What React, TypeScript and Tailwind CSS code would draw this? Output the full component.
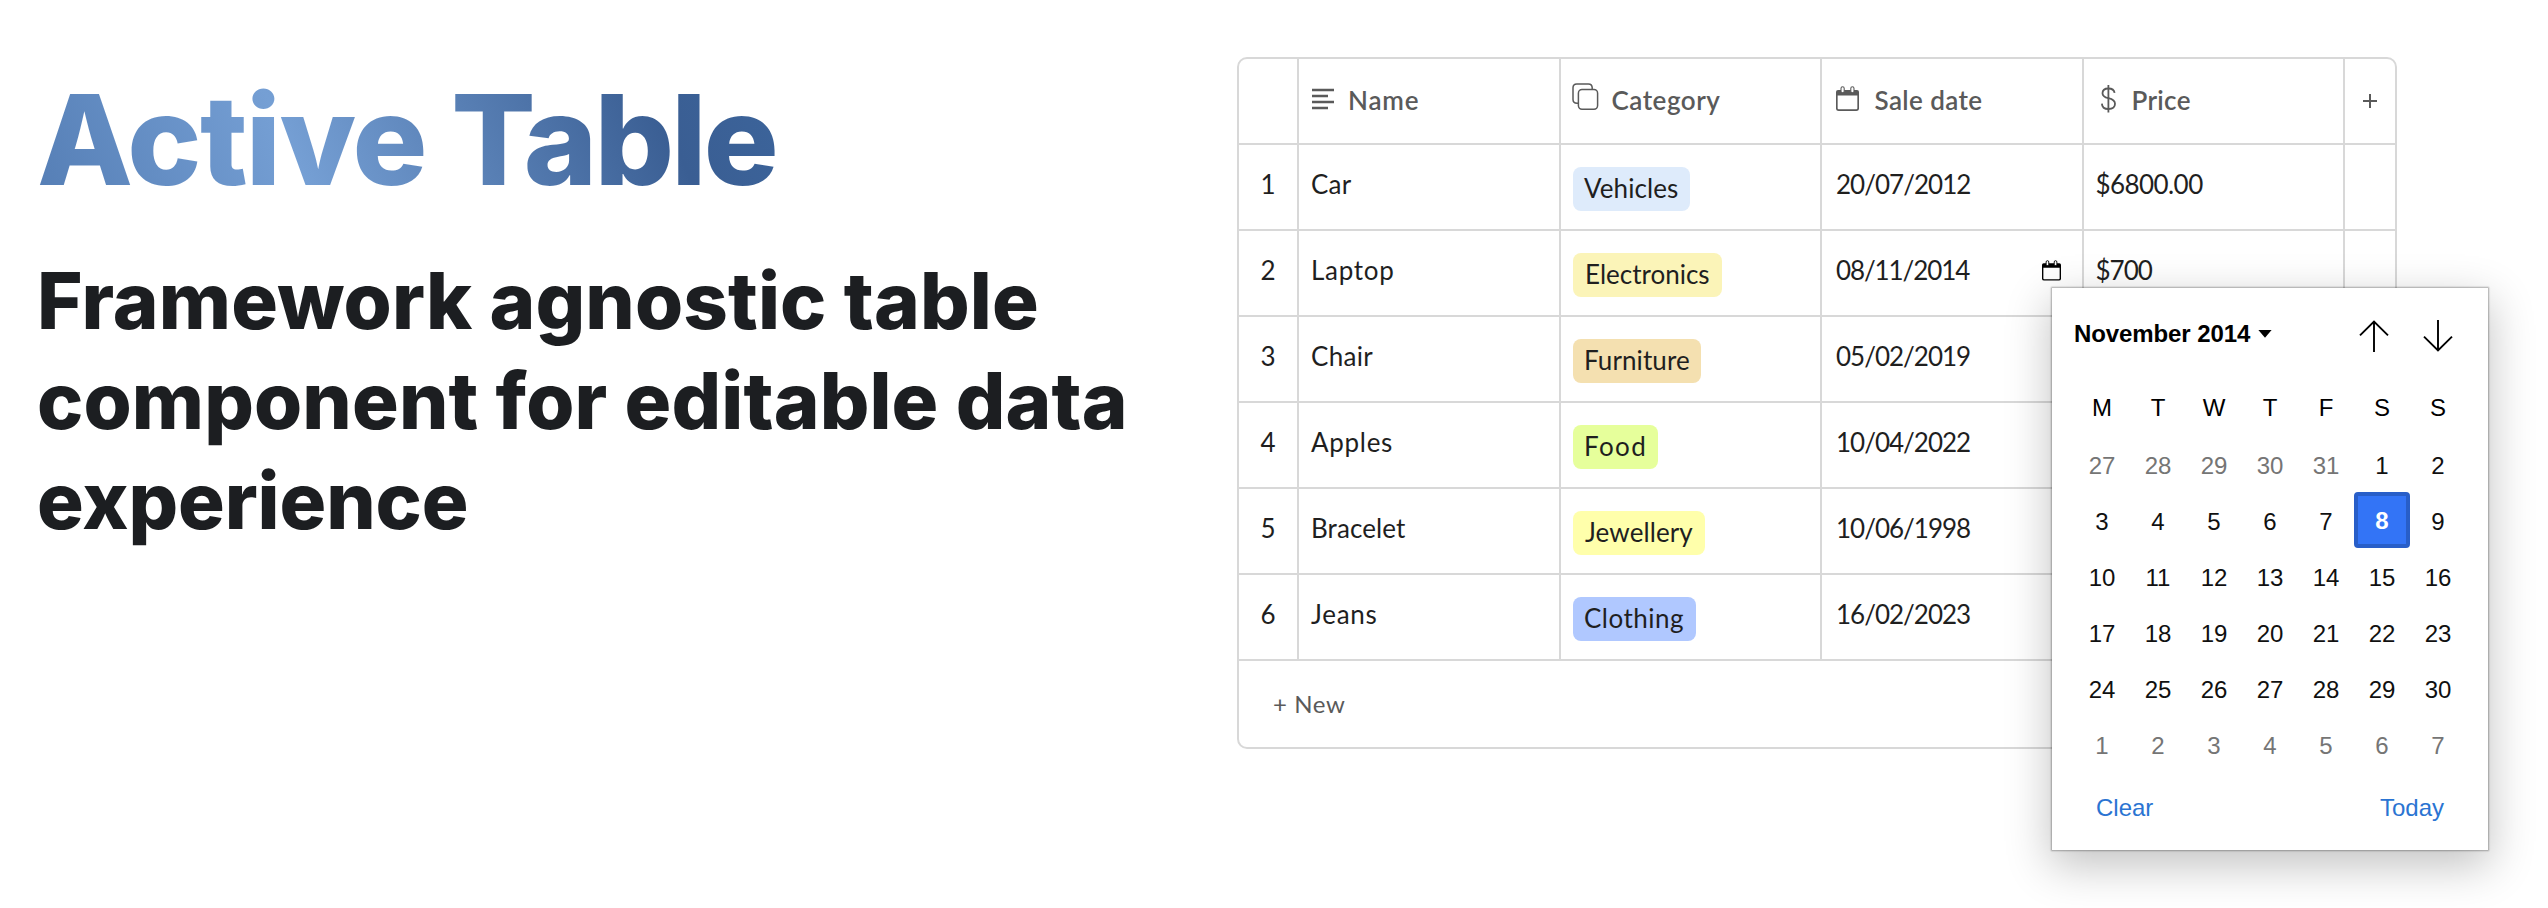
type Row = {
  name: string;
  nameTracking: string;
  category: string;
  tag: string;
  date: string;
  dateTracking: string;
  price?: string;
  priceTracking?: string;
};

const rows: Row[] = [
  { name: "Car", nameTracking: "tracking-[0.2px]", category: "Vehicles", tag: "w-[117px] bg-[#deebfb] pl-[11px] tracking-[0.1px]", date: "20/07/2012", dateTracking: "tracking-[-0.98px]", price: "$6800.00", priceTracking: "tracking-[-0.57px]" },
  { name: "Laptop", nameTracking: "tracking-[0.7px]", category: "Electronics", tag: "w-[149px] bg-[#fbf4b8] pl-[12px]", date: "08/11/2014", dateTracking: "tracking-[-1.1px]", price: "$700", priceTracking: "tracking-[-1px]" },
  { name: "Chair", nameTracking: "tracking-[0.3px]", category: "Furniture", tag: "w-[128px] bg-[#f4e0b0] pl-[11px] tracking-[0.1px]", date: "05/02/2019", dateTracking: "tracking-[-1px]" },
  { name: "Apples", nameTracking: "tracking-[0.7px]", category: "Food", tag: "w-[85px] bg-[#e6ff9b] pl-[11px] tracking-[1.4px]", date: "10/04/2022", dateTracking: "tracking-[-1px]" },
  { name: "Bracelet", nameTracking: "tracking-[0.1px]", category: "Jewellery", tag: "w-[132px] bg-[#ffffab] pl-[12px] tracking-[0.1px]", date: "10/06/1998", dateTracking: "tracking-[-1px]" },
  { name: "Jeans", nameTracking: "tracking-[0.7px]", category: "Clothing", tag: "w-[123px] bg-[#b0c8ff] pl-[11px] tracking-[0.5px]", date: "16/02/2023", dateTracking: "tracking-[-1px]" },
];

const columns = "grid grid-cols-[60px_262px_261px_262px_261px_50px]";
const cell = "h-full border-r-2 border-[#d8d8d8]";

const weekdays = ["M", "T", "W", "T", "F", "S", "S"];
const days = [
  27, 28, 29, 30, 31, 1, 2, 3, 4, 5, 6, 7, 8, 9, 10, 11, 12, 13, 14, 15, 16, 17, 18, 19, 20, 21, 22, 23, 24, 25, 26, 27,
  28, 29, 30, 1, 2, 3, 4, 5, 6, 7,
];

function TextIcon() {
  return (
    <svg width="22" height="22" viewBox="0 0 22 22" stroke="currentColor" strokeWidth="2.4" fill="none">
      <path d="M0 2H22M0 8H16M0 14H22M0 20H16" />
    </svg>
  );
}

function CopyIcon() {
  return (
    <svg width="27" height="27" viewBox="0 0 27 27" stroke="currentColor" strokeWidth="1.5" fill="none">
      <rect x="6.4" y="6.6" width="19.2" height="19.6" rx="3.6" />
      <path d="M6.2 20.2H5Q1 20 1 16.4V4.8Q1 1 4.8 1H16.4Q20 1 20.2 4.6V6.4" />
    </svg>
  );
}

function CalendarIcon({ size }: { size: number }) {
  return (
    <svg width={size} height={(size * 25) / 23} viewBox="0 0 23 25" fill="none" stroke="currentColor">
      <path d="M2 4H21Q23 4 23 6V9.5H0V6Q0 4 2 4Z" fill="currentColor" stroke="none" />
      <path d="M0.8 8V22.3Q0.8 24.1 2.6 24.1H20.4Q22.2 24.1 22.2 22.3V8" strokeWidth="1.7" />
      <rect x="5" y="0.8" width="3.2" height="6" rx="1.6" fill="white" strokeWidth="1.1" />
      <rect x="14.8" y="0.8" width="3.2" height="6" rx="1.6" fill="white" strokeWidth="1.1" />
    </svg>
  );
}

function DollarIcon() {
  return (
    <svg width="15" height="28" viewBox="0 0 15 28" stroke="currentColor" strokeWidth="1.8" fill="none">
      <path d="M13.6 7.9C13.2 5 10.8 3.5 7.4 3.5C3.8 3.5 1.5 5.3 1.5 8.2C1.5 11.4 4.2 12.4 7.4 13.2C11 14.1 14 15.2 14 18.8C14 22.2 11.2 24 7.5 24C3.6 24 1 22 0.9 18.6" />
      <path d="M7.4 0V27.6" />
    </svg>
  );
}

function ArrowIcon({ down = false }: { down?: boolean }) {
  return (
    <svg width="30" height="32" viewBox="0 0 30 32" stroke="currentColor" strokeWidth="1.9" fill="none">
      <path d={down ? "M15 0V31M1 16.6L15 30.4L29 16.6" : "M15 32V1M1 15.4L15 1.6L29 15.4"} />
    </svg>
  );
}

function DatePicker() {
  return (
    <div className="absolute left-[2052px] top-[288px] h-[562px] w-[436px] bg-white font-['Liberation_Sans',sans-serif] text-[24px] text-black shadow-[0_0_1.5px_0.7px_rgba(0,0,0,0.3),0_14px_42px_2px_rgba(0,0,0,0.24)]">
      <div className="flex h-[92px] items-center pl-[22px] pr-[35px]">
        <div className="flex items-center gap-[8px]">
          <span className="font-bold tracking-[-0.1px]">November 2014</span>
          <svg width="14" height="8" viewBox="0 0 14 8">
            <path d="M0.4 0H13.6L7 7.8Z" />
          </svg>
        </div>
        <div className="ml-auto mt-1 flex gap-[34px]">
          <ArrowIcon />
          <ArrowIcon down />
        </div>
      </div>
      <div className="grid grid-cols-7 px-[22px] text-center leading-[56px]">
        {weekdays.map((d, i) => (
          <div key={i} className="h-[56px]">{d}</div>
        ))}
        {days.map((d, i) =>
          i === 12 ? (
            <div key={i} className="h-[56px] rounded-[4px] border-4 border-[#285ec8] bg-[#3374f6] font-bold leading-[50px] text-white">
              {d}
            </div>
          ) : (
            <div key={i} className={i < 5 || i > 34 ? "h-[56px] pt-[2px] text-[#757575]" : "h-[56px] pt-[2px] text-[#101010]"}>
              {d}
            </div>
          ),
        )}
      </div>
      <div className="flex h-[72px] items-center justify-between px-[44px] text-[#2a74d2]">
        <span>Clear</span>
        <span>Today</span>
      </div>
    </div>
  );
}

export default function App() {
  return (
    <div className="relative flex h-[908px] w-[2548px] overflow-hidden bg-white">
      <div className="w-[1237px] shrink-0 pl-[37px] pt-[62px] font-['Inter',sans-serif] font-extrabold">
        <h1 className="w-fit bg-[linear-gradient(65deg,#547db4_0%,#759fd4_35%,#3a5e93_82%,#3c659c_100%)] bg-clip-text pr-2 text-[124.8px] leading-[156px] tracking-[-1.7px] text-transparent">
          Active <span className="tracking-[-2.8px]">Table</span>
        </h1>
        <h2 className="mt-[33px] text-[77.9px] leading-[100px] tracking-[0.13px] text-[#1c1e21]">
          Framework agnostic table
          <br />
          component for editable data
          <br />
          <span className="tracking-[-0.1px]">experience</span>
        </h2>
      </div>

      <div className="mt-[57px] h-[692px] w-[1160px] shrink-0 overflow-hidden rounded-[10px] border-2 border-[#d8d8d8] font-['Lato',sans-serif] text-[26px] leading-[32px] text-[#1f1f1f]">
        <div className={`${columns} h-[86px] border-b-2 border-[#d8d8d8] font-semibold text-[#5a5a5a]`}>
          <div className={cell} />
          <div className={`${cell} flex pl-[13px] pt-[25px]`}>
            <div className="mt-[4px] w-[36px]"><TextIcon /></div>
            <span className="tracking-[0.8px]">Name</span>
          </div>
          <div className={`${cell} flex pl-[11px] pt-[25px]`}>
            <div className="-mt-px w-[39.5px]"><CopyIcon /></div>
            <span className="tracking-[0.5px]">Category</span>
          </div>
          <div className={`${cell} flex pl-[13.5px] pt-[25px]`}>
            <div className="mt-[2px] w-[39px]"><CalendarIcon size={23} /></div>
            <span className="tracking-[0.4px]">Sale date</span>
          </div>
          <div className={`${cell} flex pl-[17px] pt-[25px]`}>
            <div className="mt-px w-[30.5px]"><DollarIcon /></div>
            <span className="tracking-[0.3px]">Price</span>
          </div>
          <div className="flex items-center justify-center">
            <svg width="14" height="14" viewBox="0 0 14 14" stroke="currentColor" strokeWidth="2" fill="none">
              <path d="M7 0V14M0 7H14" />
            </svg>
          </div>
        </div>

        {rows.map((row, i) => (
          <div key={row.name} className={`${columns} h-[86px] border-b-2 border-[#d8d8d8]`}>
            <div className={`${cell} pt-[23px] text-center`}>{i + 1}</div>
            <div className={`${cell} pl-[12px] pt-[23px] ${row.nameTracking}`}>{row.name}</div>
            <div className={`${cell} pl-[12px] pt-[22px]`}>
              <div className={`h-[44px] rounded-[8px] leading-[42px] ${row.tag}`}>{row.category}</div>
            </div>
            <div className={`${cell} flex justify-between pl-[14px] pr-[21px] pt-[23px]`}>
              <span className={row.dateTracking}>{row.date}</span>
              {i === 1 && (
                <div className="mt-[6px] text-black"><CalendarIcon size={19} /></div>
              )}
            </div>
            <div className={`${cell} pl-[11.5px] pt-[23px] ${row.priceTracking ?? ""}`}>{row.price}</div>
            <div />
          </div>
        ))}

        <div className="flex h-[86px] items-center pl-[34px] text-[24px] tracking-[0.6px] text-[#5a5a5a]">+ New</div>
      </div>

      <DatePicker />
    </div>
  );
}
